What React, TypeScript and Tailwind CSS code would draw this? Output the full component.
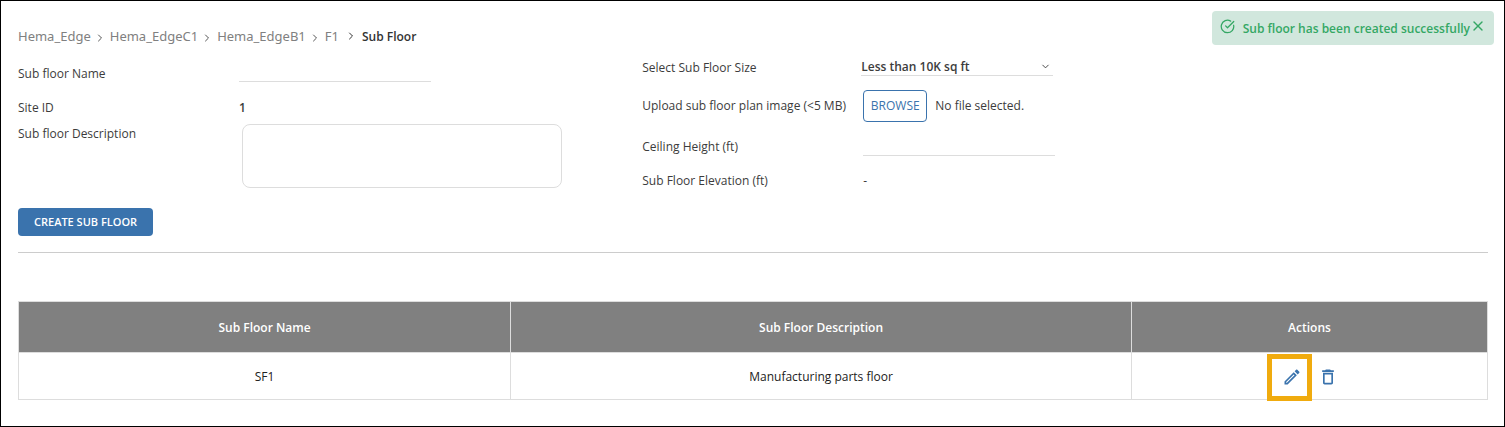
import { ChevronDown, ChevronRight, CircleCheckBig, X } from "lucide-react";
import { Fragment, useRef, useState } from "react";
import { MdDeleteOutline, MdOutlineEdit } from "react-icons/md";

const crumbs = ["Hema_Edge", "Hema_EdgeC1", "Hema_EdgeB1", "F1"];
const sizes = ["Less than 10K sq ft", "10K - 50K sq ft", "More than 50K sq ft"];
const subFloors = [{ name: "SF1", description: "Manufacturing parts floor" }];

function Toast({ onClose }: { onClose: () => void }) {
  return (
    <div
      role="status"
      className="absolute top-[10px] right-[10px] flex h-[34px] items-center rounded bg-[#d1e7dd] pr-2 pl-2 text-[#34a764]"
    >
      <CircleCheckBig size={15} strokeWidth={2} className="mb-1" />
      <span className="ml-2 pt-0.5 text-xs font-semibold">Sub floor has been created successfully</span>
      <button type="button" aria-label="Close" onClick={onClose} className="mb-1">
        <X size={16} strokeWidth={2} />
      </button>
    </div>
  );
}

function Breadcrumb() {
  return (
    <nav aria-label="Breadcrumb" className="flex h-5 items-center text-[13px] text-[#808080]">
      {crumbs.map((c, i) => (
        <Fragment key={c}>
          <a href="#" className="font-['Noto_Sans',sans-serif]">{c}</a>
          {i < crumbs.length - 1 ? (
            <ChevronRight size={12} className="mt-0.5 mr-1 ml-[3px] text-[#555]" />
          ) : (
            <ChevronRight size={12} className="mr-1 mb-0.5 ml-[6px] text-[#333]" />
          )}
        </Fragment>
      ))}
      <span className="ml-px text-xs font-semibold text-[#333]">Sub Floor</span>
    </nav>
  );
}

export default function App() {
  const [toast, setToast] = useState(true);
  const [fileName, setFileName] = useState("No file selected.");
  const fileRef = useRef<HTMLInputElement>(null);

  return (
    <div className="relative min-h-screen border border-black bg-white pt-[26px] pr-4 pb-6 pl-[17px] font-['Open_Sans','Noto_Sans',sans-serif] text-xs text-[#3c3c3c]">
      {toast && <Toast onClose={() => setToast(false)} />}
      <Breadcrumb />

      <form onSubmit={(e) => e.preventDefault()}>
        <div className="grid grid-cols-[53fr_72fr] font-medium">
          <div className="pt-3">
            <div className="flex h-7 items-center">
              <label htmlFor="name" className="w-[221px] pt-0.5">Sub floor Name</label>
              <input id="name" className="h-[18px] w-48 border-b border-[#ddd] outline-none" />
            </div>
            <div className="mt-[7px] flex h-7 items-center">
              <span className="w-[221px]">Site ID</span>
              <span className="font-semibold">1</span>
            </div>
            <div className="mt-0.5 flex items-start">
              <label htmlFor="description" className="w-56 pt-0.5">Sub floor Description</label>
              <textarea
                id="description"
                className="h-16 w-80 resize-none rounded-lg border border-[#ddd] p-2 outline-none"
              />
            </div>
          </div>

          <div className="pt-1 pl-px">
            <div className="flex h-8 items-center">
              <label htmlFor="size" className="w-[219px] pt-0.5">Select Sub Floor Size</label>
              <div className="relative">
                <select
                  id="size"
                  className="block h-[18px] w-48 appearance-none border-b border-[#ddd] font-semibold outline-none"
                >
                  {sizes.map((s) => (
                    <option key={s}>{s}</option>
                  ))}
                </select>
                <ChevronDown size={11} className="pointer-events-none absolute top-[3px] right-[2px]" />
              </div>
            </div>
            <div className="mt-[3px] flex h-10 items-center">
              <label htmlFor="plan" className="w-[221px]">Upload sub floor plan image (&lt;5 MB)</label>
              <input
                id="plan"
                ref={fileRef}
                type="file"
                accept="image/*"
                className="hidden"
                onChange={(e) => setFileName(e.target.files?.[0]?.name ?? "No file selected.")}
              />
              <button
                type="button"
                onClick={() => fileRef.current?.click()}
                className="h-8 w-16 rounded border border-[#3a73ad] text-[#3a73ad]"
              >
                BROWSE
              </button>
              <span className="ml-2">{fileName}</span>
            </div>
            <div className="mt-[5px] flex h-8 items-center">
              <label htmlFor="ceiling" className="w-[221px]">Ceiling Height (ft)</label>
              <input id="ceiling" className="h-[18px] w-48 border-b border-[#ddd] outline-none" />
            </div>
            <div className="mt-1 flex h-7 items-center">
              <span className="w-[221px]">Sub Floor Elevation (ft)</span>
              <span>-</span>
            </div>
          </div>
        </div>

        <button
          type="submit"
          className="mt-[13px] h-7 rounded bg-[#3a73ad] px-4 text-[11px] font-semibold text-white"
        >
          CREATE SUB FLOOR
        </button>
      </form>

      <hr className="mt-4 border-[#ccc]" />

      <table className="mt-12 w-full table-fixed border-collapse text-center">
        <thead>
          <tr className="h-[51px] bg-[#808080] text-white">
            <th className="w-[33.5%] border border-[#ddd] pt-0.5 font-semibold">Sub Floor Name</th>
            <th className="border border-[#ddd] pt-0.5 font-semibold">Sub Floor Description</th>
            <th className="w-[356px] border border-[#ddd] pt-0.5 font-semibold">Actions</th>
          </tr>
        </thead>
        <tbody>
          {subFloors.map((f) => (
            <tr key={f.name} className="h-[47px] text-[#222]">
              <td className="border border-[#ddd] pt-0.5">{f.name}</td>
              <td className="border border-[#ddd] pt-0.5">{f.description}</td>
              <td className="border border-[#ddd] pt-0.5">
                <div className="flex items-center justify-center gap-4 text-[#3a73ad]">
                  <button type="button" aria-label="Edit" className="relative">
                    <MdOutlineEdit size={20} />
                    <span className="absolute -top-[13px] -right-[10px] -bottom-[14px] -left-[15px] border-5 border-[#f0ab0e]" />
                  </button>
                  <button type="button" aria-label="Delete">
                    <MdDeleteOutline size={20} />
                  </button>
                </div>
              </td>
            </tr>
          ))}
        </tbody>
      </table>
    </div>
  );
}
